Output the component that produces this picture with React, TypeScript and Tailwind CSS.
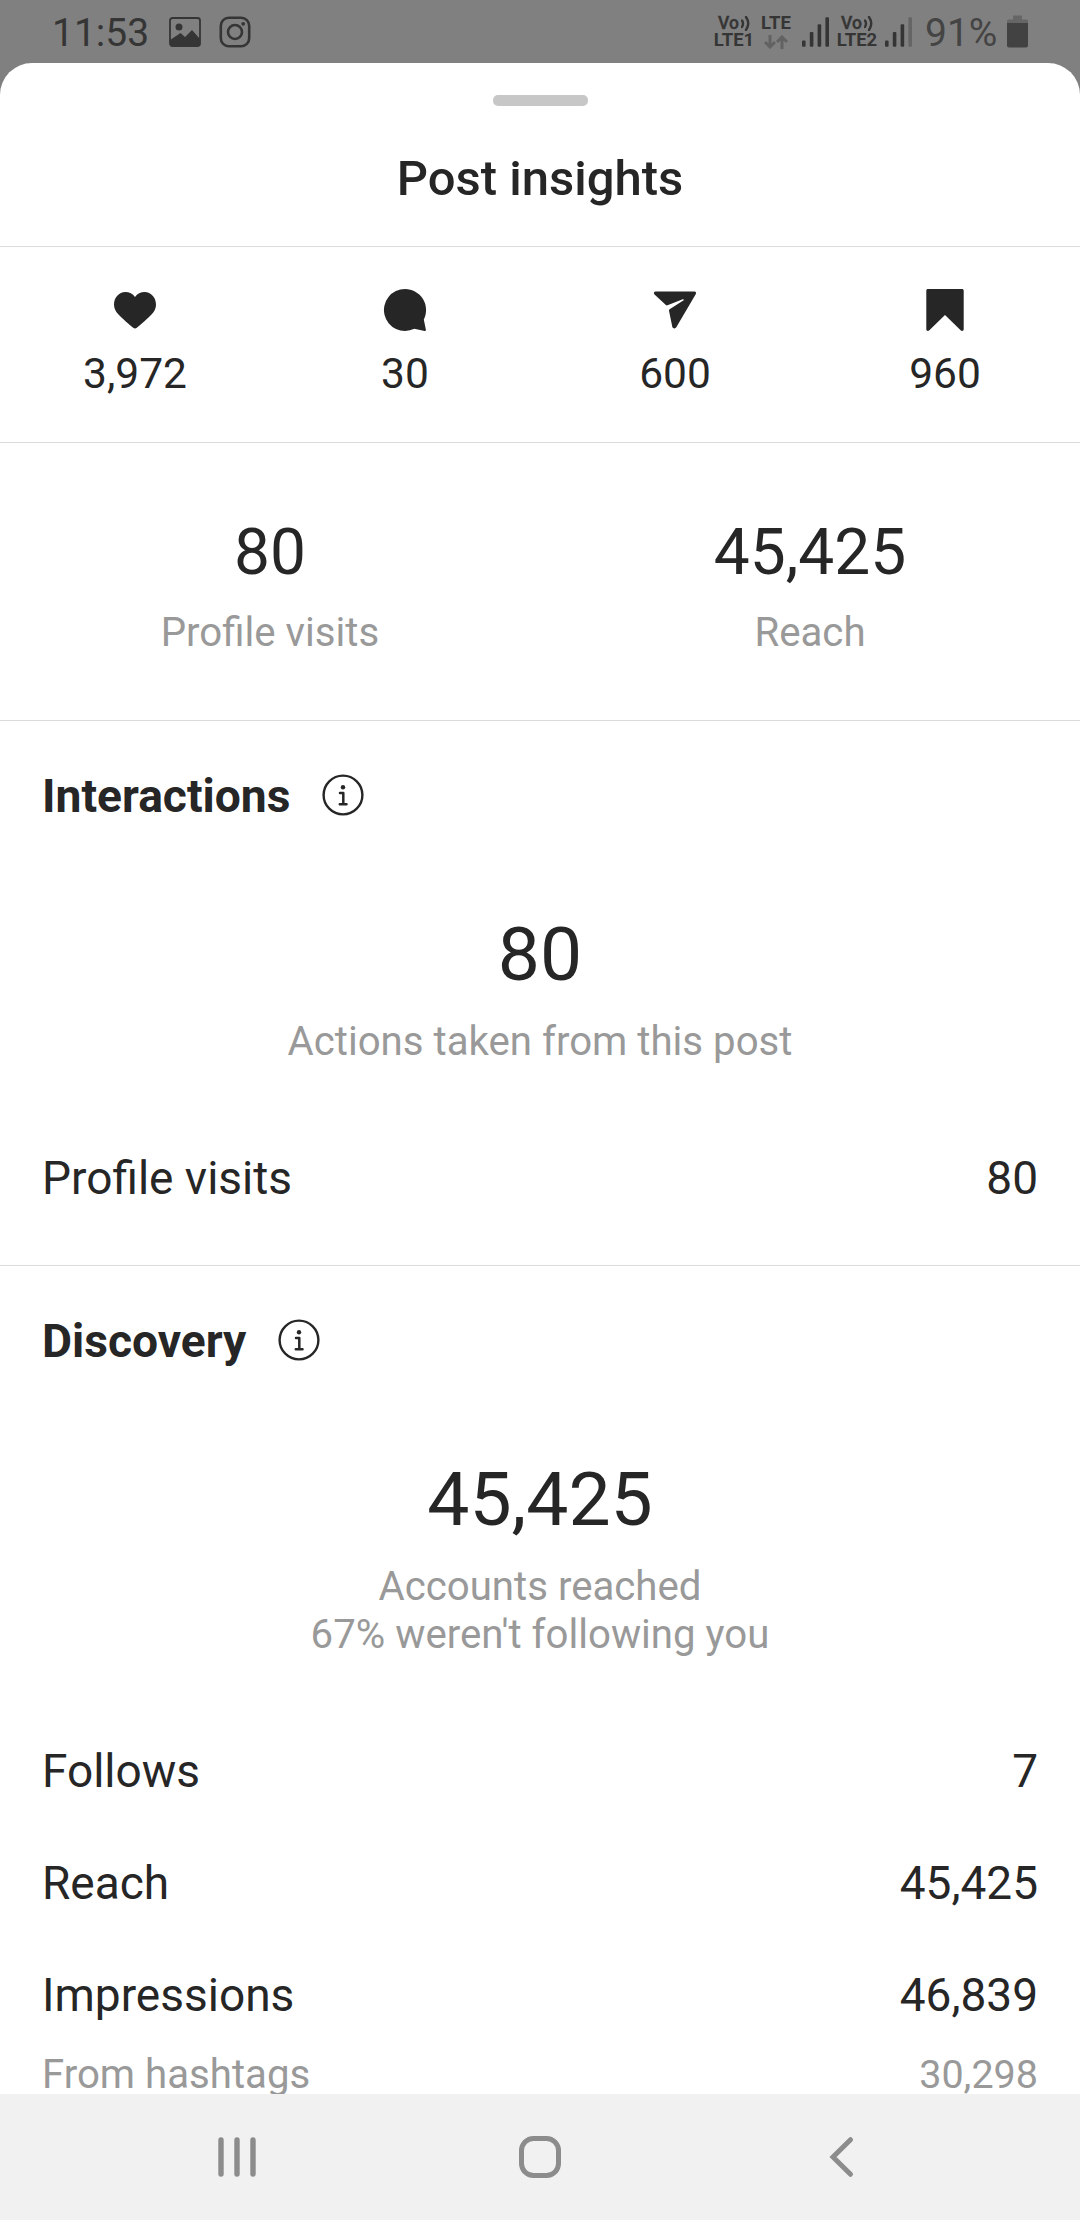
import React from 'react';

interface RowProps {
  label: string;
  value: string;
}

const stats = [
  { name: 'likes', value: '3,972', Icon: HeartIcon },
  { name: 'comments', value: '30', Icon: CommentIcon },
  { name: 'shares', value: '600', Icon: ShareIcon },
  { name: 'saves', value: '960', Icon: SaveIcon },
];

const totals = [
  { label: 'Profile visits', value: '80' },
  { label: 'Reach', value: '45,425' },
];

const discoveryRows = [
  { label: 'Follows', value: '7' },
  { label: 'Reach', value: '45,425' },
  { label: 'Impressions', value: '46,839' },
];

function HeartIcon() {
  return (
    <svg className="w-12 h-12" viewBox="0 0 48 48" fill="currentColor">
      <path d="M24 42.6c-.7 0-1.300-.4-1.800-.8C18.500 38.500 11 32.500 7.500 28.500 4.500 25.200 3 22 3 18.400 3 11.600 8 6 14.300 6c4 0 7.500 1.800 9.700 5 2.200-3.200 5.700-5 9.700-5C40 6 45 11.600 45 18.400c0 3.600-1.500 6.800-4.500 10.100-3.500 4-11 10-14.700 13.300-.5.4-1.100.8-1.800.8z" />
    </svg>
  );
}

function CommentIcon() {
  return (
    <svg className="w-12 h-12" viewBox="0 0 48 48" fill="currentColor">
      <path d="M24 3a21 21 0 1 0 9.300 39.800l10.300 2.100c.9.200 1.500-.3 1.300-1.200l-2.100-10.200A21 21 0 0 0 24 3z" />
    </svg>
  );
}

function ShareIcon() {
  return (
    <svg className="w-12 h-12" viewBox="0 0 48 48" fill="currentColor">
      <path d="M4.600 5.500h38.800c1.500 0 2.100 1.300 1.300 2.700L25.300 41.300c-1 1.700-3.600 1.300-4-.5L18 24.800c-.1-.6 0-1.100.6-1.500L32.300 14.600c1-.7.500-1.700-.6-1.300L16.500 19.300c-.6.300-1.200.1-1.600-.3L3.500 8.400C2.300 7.200 3.100 5.500 4.600 5.500z" />
    </svg>
  );
}

function SaveIcon() {
  return (
    <svg className="w-12 h-12" viewBox="0 0 48 48" fill="currentColor">
      <path d="M7 3h34c1 0 1.700.7 1.700 1.700v38.600c0 1.600-1.700 2.200-2.800 1.200L24 29 8.100 44.500c-1.100 1-2.800.4-2.800-1.200V4.700C5.300 3.700 6 3 7 3z" />
    </svg>
  );
}

function InfoIcon() {
  return (
    <svg className="mb-[3px] w-[42px] h-[42px]" viewBox="0 0 42 42" fill="none" stroke="currentColor">
      <circle cx="21" cy="21" r="19.400" strokeWidth="2.400" />
      <circle cx="21" cy="13.200" r="2.200" fill="currentColor" stroke="none" />
      <path d="M18 19h3.300v11M17.800 30.300h6.700" strokeWidth="2.500" strokeLinecap="round" strokeLinejoin="round" />
    </svg>
  );
}

function VolteLabel({ slot }: { slot: string }) {
  return (
    <div className="flex w-10 flex-col items-center font-bold">
      <div className="flex h-[17px] items-center gap-[2px] text-[17.500px] leading-[17px] font-medium">
        <span className="[-webkit-text-stroke:0.4px_currentColor]">Vo</span>
        <svg className="w-[9px] h-[15px]" viewBox="0 0 9 15" fill="none" stroke="currentColor" strokeWidth="2.400" strokeLinecap="round">
          <path d="M1 4.500q2 3 0 6.500M5 1q4.500 6.500 0 13" />
        </svg>
      </div>
      <span className="text-[18.500px] leading-[17px]">{slot}</span>
    </div>
  );
}

function SignalBars({ weak = false }: { weak?: boolean }) {
  return (
    <svg className="w-[27px] h-[30px]" viewBox="0 0 27 30" fill="currentColor">
      <rect x="0" y="23.500" width="3.600" height="6.200" rx="1" />
      <rect x="7.800" y="15" width="3.600" height="14.700" rx="1" />
      <rect x="15.600" y="7.200" width="3.600" height="22.500" rx="1" />
      <rect x="23.400" y="0.300" width="3.600" height="29.400" rx="1" fillOpacity={weak ? 0.35 : 1} />
    </svg>
  );
}

function StatusBar() {
  return (
    <div className="flex h-[63px] items-center pl-[52px] pr-[52px] text-[#353535]">
      <span className="w-[117px] text-[39px] leading-[46px] pt-[3px]">11:53</span>
      <svg className="w-8 h-[30px]" viewBox="0 0 32 30">
        <rect x="1" y="1" width="30" height="28" rx="2.500" fill="none" stroke="currentColor" strokeWidth="1.800" />
        <circle cx="10" cy="10" r="3.500" fill="currentColor" />
        <path d="M1 23l10.500-7 4.500 4 7-7 8 9v7H1z" fill="currentColor" />
      </svg>
      <svg className="ml-[18px] w-8 h-8" viewBox="0 0 32 32" fill="none" stroke="currentColor" strokeWidth="2.600">
        <rect x="1.800" y="1.800" width="28.400" height="28.400" rx="8" />
        <circle cx="16" cy="16" r="7" />
        <circle cx="24.200" cy="7.800" r="1.900" fill="currentColor" stroke="none" />
      </svg>

      {/* Network, signal and battery */}
      <div className="ml-auto flex items-center">
        <VolteLabel slot="LTE1" />
        <div className="ml-[6px] flex w-8 flex-col items-center">
          <span className="text-[18.500px] leading-[17px] font-bold">LTE</span>
          <svg className="mt-[3px] w-6 h-[14px] text-[#626262]" viewBox="0 0 24 14" fill="none" stroke="currentColor" strokeWidth="3">
            <path d="M6 0v12M1 7l5 5 5-5M18 14V2M13 7l5-5 5 5" />
          </svg>
        </div>
        <div className="ml-[10px]"><SignalBars /></div>
        <div className="ml-[8px]"><VolteLabel slot="LTE2" /></div>
        <div className="ml-[8px]"><SignalBars weak /></div>
        <span className="ml-[13px] w-[73px] text-[39px] leading-[46px] pt-[3px] text-[#444444]">91%</span>
        <svg className="ml-[9px] w-[21px] h-[33px]" viewBox="0 0 21 33">
          <path d="M6 0.500h9v4h4.500q1.500 0 1.500 1.500v2H0V6q0-1.500 1.500-1.500H6z" fill="#666666" />
          <path d="M0 8h21v22.500q0 2-2 2H2q-2 0-2-2z" fill="#424242" />
        </svg>
      </div>
    </div>
  );
}

function SectionTitle({ children }: { children: React.ReactNode }) {
  return (
    <div className="flex items-center gap-8">
      <h2 className="text-[46.200px] leading-[56px] font-bold">{children}</h2>
      <InfoIcon />
    </div>
  );
}

function Row({ label, value }: RowProps) {
  return (
    <div className="flex justify-between text-[46px] leading-[56px]">
      <span>{label}</span>
      <span>{value}</span>
    </div>
  );
}

export default function App() {
  return (
    <div className="flex h-[2220px] w-[1080px] flex-col overflow-hidden bg-[#808080] font-['Roboto',sans-serif] text-[#262626]">
      <StatusBar />

      {/* Bottom sheet */}
      <main className="min-h-0 flex-1 overflow-hidden rounded-t-[32px] bg-white">
        <header className="flex h-[184px] flex-col items-center border-b border-[#dbdbdb] pt-8">
          <div className="h-[11px] w-[95px] rounded-[5px] bg-[#c7c7c7]"></div>
          <h1 className="mt-[43px] text-[49px] leading-[60px] font-medium">Post insights</h1>
        </header>

        <section className="grid h-[196px] grid-cols-4 border-b border-[#dbdbdb] pt-[39px]">
          {stats.map(({ name, value, Icon }) => (
            <div key={name} className="flex flex-col items-center">
              <Icon />
              <span className="mt-[15px] text-[42.500px] leading-[50px]">{value}</span>
            </div>
          ))}
        </section>

        <section className="grid h-[278px] grid-cols-2 border-b border-[#dbdbdb] pt-[72px] text-center">
          {totals.map((total) => (
            <div key={total.label}>
              <p className="text-[64px] leading-[76px]">{total.value}</p>
              <p className="mt-[18px] text-[40.200px] leading-[48px] text-[#999999]">{total.label}</p>
            </div>
          ))}
        </section>

        {/* Interactions */}
        <section className="h-[545px] border-b border-[#dbdbdb] px-[42px] pt-[47px]">
          <SectionTitle>Interactions</SectionTitle>
          <p className="mt-[86px] text-center text-[75px] leading-[88px]">80</p>
          <p className="mt-[20px] mb-[84px] text-center text-[40.200px] leading-[48px] text-[#999999]">
            Actions taken from this post
          </p>
          <Row label="Profile visits" value="80" />
        </section>

        {/* Discovery */}
        <section className="px-[42px] pt-[47px]">
          <SectionTitle>Discovery</SectionTitle>
          <p className="mt-[86px] text-center text-[75px] leading-[88px]">45,425</p>
          <p className="mt-[20px] mb-[84px] text-center text-[40.200px] leading-[48px] text-[#999999]">
            Accounts reached
            <br />
            67% weren't following you
          </p>
          <div className="flex flex-col gap-14">
            {discoveryRows.map((row) => (
              <Row key={row.label} label={row.label} value={row.value} />
            ))}
          </div>
          <div className="mt-[28px] flex justify-between text-[40.200px] leading-[48px] text-[#999999]">
            <span>From hashtags</span>
            <span className="text-[39.500px]">30,298</span>
          </div>
        </section>
      </main>

      {/* Android navigation */}
      <nav className="flex h-[126px] items-center justify-between bg-[#f1f1f1] pl-[216px] pr-[217px] text-[#8c8c8c]">
        <svg className="w-[42px] h-[42px]" viewBox="0 0 42 42" fill="none" stroke="currentColor" strokeWidth="5.400" strokeLinecap="round">
          <path d="M5 4v34M21 4v34M37 4v34" />
        </svg>
        <svg className="w-[42px] h-[42px]" viewBox="0 0 42 42" fill="none" stroke="currentColor" strokeWidth="5">
          <rect x="2.500" y="2.500" width="37" height="37" rx="12" />
        </svg>
        <svg className="w-[42px] h-[42px]" viewBox="0 0 42 42" fill="none" stroke="currentColor" strokeWidth="5" strokeLinecap="round">
          <path d="M29.500 3.700L12 21l17.500 17.300" />
        </svg>
      </nav>
    </div>
  );
}
